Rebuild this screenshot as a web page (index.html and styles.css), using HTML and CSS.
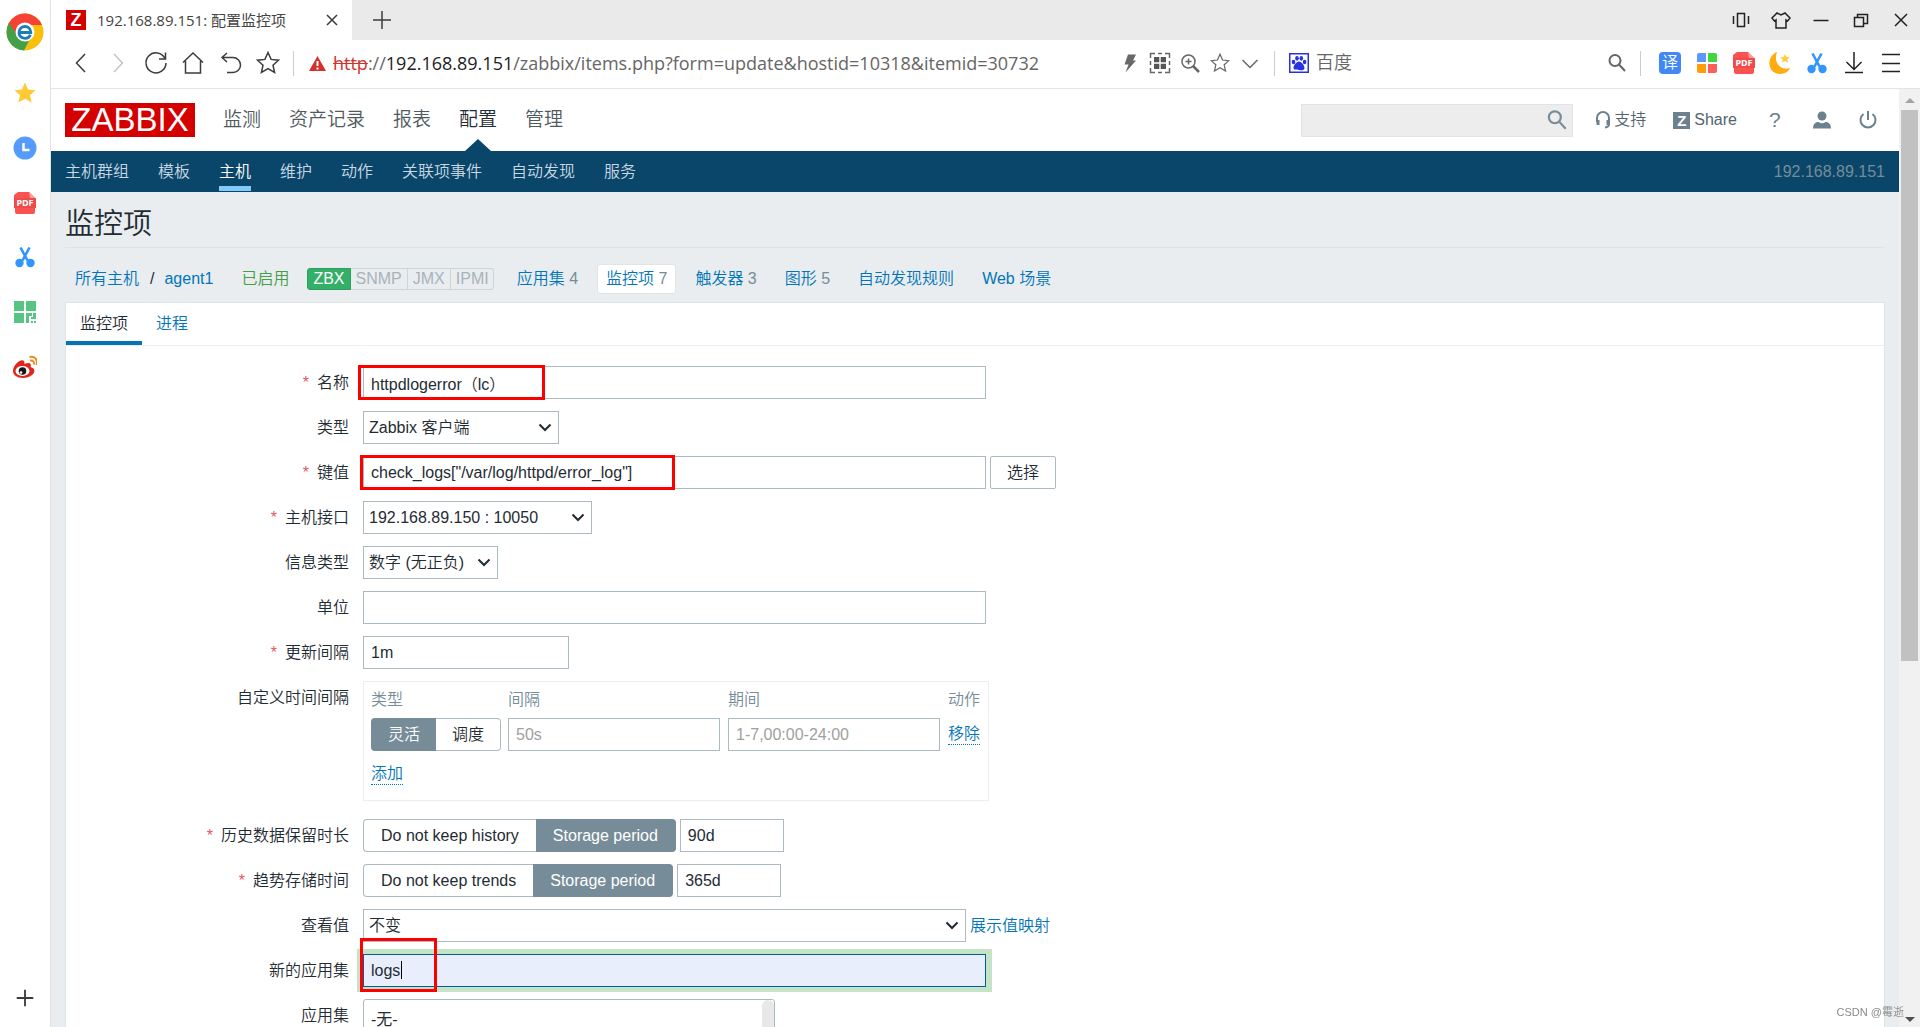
FILE: index.html
```html
<!DOCTYPE html>
<html lang="zh-CN">
<head>
<meta charset="utf-8">
<title>192.168.89.151: 配置监控项</title>
<link rel="stylesheet" href="styles.css">
</head>
<body>
<svg class="defs" aria-hidden="true">
  <symbol id="i-star" viewBox="0 0 24 24"><path d="M12 1.500l3.100 6.900 7.400.8-5.500 5 1.600 7.300-6.600-3.800-6.600 3.800 1.600-7.300-5.500-5 7.400-.8z"/></symbol>
  <symbol id="i-pdf" viewBox="0 0 24 24"><path d="M5 1h11l6 6v14a2 2 0 0 1-2 2H4a2 2 0 0 1-2-2V7H1V4z" fill="#fb5150"/><path d="M16 1l6 6h-5z" fill="#ff9a96"/><path d="M1 7h22v10H1z" fill="#f14a4a"/></symbol>
  <symbol id="i-cut" viewBox="0 0 24 24"><path d="M7.500 2.500l7 13M16.500 2.500l-7 13" stroke="#2f96fb" stroke-width="2.600" fill="none"/><circle cx="6.500" cy="18" r="4.200" fill="#2f96fb"/><circle cx="17.500" cy="18" r="4.200" fill="#2f96fb"/></symbol>
  <symbol id="i-search" viewBox="0 0 24 24"><circle cx="10" cy="9.500" r="5.500" fill="none"/><path d="M14 13.500l6 6.500"/></symbol>
</svg>
<div class="browser">
  <aside class="dock" aria-label="侧边栏">
    <svg class="dock-logo" viewBox="0 0 38 38"><circle cx="19" cy="19" r="18.500" fill="#f9bf0b"/><path d="M2.500 10.500A18.500 18.500 0 0 1 36 12H19l-8 12z" fill="#f44336"/><path d="M2.800 10A18.500 18.500 0 0 0 18 37.500L25 24l-13-1z" fill="#43a047"/><circle cx="19" cy="19" r="9.500" fill="#fff"/><path d="M12.500 19.500h12.300c0-8-11.800-8-11.800 0 0 7 9.500 7.500 11.300 2.300" fill="none" stroke="#1a7fb8" stroke-width="2.800"/></svg>
    <div class="dock-items">
      <button aria-label="收藏"><svg fill="#fecb36"><use href="#i-star"/></svg></button>
      <button aria-label="历史"><svg viewBox="0 0 24 24"><circle cx="12" cy="12" r="11.500" fill="#559bfb"/><path d="M10.500 7v7h6" fill="none" stroke="#fff" stroke-width="2.500"/></svg></button>
      <button aria-label="PDF"><svg viewBox="0 0 24 24"><use href="#i-pdf"/><text x="12" y="15" text-anchor="middle" class="pdf-text">PDF</text></svg></button>
      <button aria-label="截图"><svg><use href="#i-cut"/></svg></button>
      <button aria-label="二维码"><svg viewBox="0 0 24 24" fill="#58c483"><path d="M1 1h10v10H1zM13 1h10v10H13zM1 13h10v10H1zM13 13h6v3h-3v7h-3zM20 13h3v6h-5v-2h2zM18 21h2v2h-2zM21 21h2v2h-2z"/></svg></button>
      <button aria-label="微博"><svg viewBox="0 0 24 24"><path d="M0 16C0 10 8 3 11 6c1 1 0 3 0 3s5-2 6.500 0c.8 1 0 3 0 3 8 2 3 11-7.500 11C4 23 0 20 0 16z" fill="#e1251b"/><ellipse cx="9.500" cy="16" rx="7" ry="5" fill="#fff"/><circle cx="9.500" cy="16" r="3.800" fill="#161616"/><circle cx="8" cy="17.500" r="1.300" fill="#fff"/><path d="M17 5.500c3-.5 4.500 1.500 3.800 4M16.500 2c5.500-1.500 8.500 3 7 8" fill="none" stroke="#f08c1e" stroke-width="2"/></svg></button>
    </div>
    <button class="dock-add" aria-label="添加"><svg viewBox="0 0 24 24" class="line"><path d="M12 3v18M3 12h18" stroke-width="2"/></svg></button>
  </aside>

  <header class="tabstrip">
    <div class="tab">
      <span class="favicon">Z</span>
      <span class="tab-title">192.168.89.151: 配置监控项</span>
      <button aria-label="关闭标签"><svg viewBox="0 0 24 24" class="line"><path d="M7 7l10 10M17 7L7 17"/></svg></button>
    </div>
    <button class="tab-new" aria-label="新标签"><svg viewBox="0 0 24 24" class="line"><path d="M12 3v18M3 12h18"/></svg></button>
    <div class="window-controls">
      <button aria-label="手机"><svg viewBox="0 0 24 24" class="line dark"><path d="M8.500 5.500h7v13h-7zM4.500 8v8M19.500 8v8"/></svg></button>
      <button aria-label="皮肤"><svg viewBox="0 0 24 24" class="line dark"><path d="M8 5l4 2 4-2 5 5-2.500 3-1.500-1v8H7v-8l-1.500 1L3 10z"/></svg></button>
      <button aria-label="最小化"><svg viewBox="0 0 24 24" class="line dark"><path d="M4.500 12.500h15"/></svg></button>
      <button aria-label="还原"><svg viewBox="0 0 24 24" class="line dark"><path d="M5.500 9.500h9v9h-9zM8.500 9V6.500h10v9H15"/></svg></button>
      <button aria-label="关闭"><svg viewBox="0 0 24 24" class="line dark"><path d="M6 6l12 12M18 6L6 18"/></svg></button>
    </div>
  </header>

  <div class="toolbar">
    <div class="nav-buttons">
      <button aria-label="后退"><svg viewBox="0 0 24 24" class="line"><path d="M16 3l-8.500 9 8.500 9"/></svg></button>
      <button aria-label="前进"><svg viewBox="0 0 24 24" class="line pale"><path d="M8 3l8.500 9L8 21"/></svg></button>
      <button aria-label="刷新"><svg viewBox="0 0 24 24" class="line"><path d="M21 7.500A10 10 0 1 0 22 12M21.500 1.500v6.500H15"/></svg></button>
      <button aria-label="主页"><svg viewBox="0 0 24 24" class="line"><path d="M2 11.500L12 2l10 9.500M4.500 10v12h15V10"/></svg></button>
      <button aria-label="撤销"><svg viewBox="0 0 24 24" class="line"><path d="M8 2L3 6.500 8 11M3 6.500h11a7.500 7.500 0 0 1 0 15H8"/></svg></button>
      <button aria-label="收藏"><svg class="line"><use href="#i-star"/></svg></button>
    </div>
    <span class="divider"></span>
    <div class="address">
      <svg class="warn" viewBox="0 0 17 16"><path d="M8.500 1L17 16H0z" fill="#d2322b"/><path d="M8.500 6v5M8.500 12.500v2" stroke="#fff" stroke-width="2"/></svg>
      <span class="url"><s>http</s>://<b>192.168.89.151</b>/zabbix/items.php?form=update&amp;hostid=10318&amp;itemid=30732</span>
    </div>
    <div class="address-tools">
      <button aria-label="加速"><svg viewBox="0 0 24 24"><path d="M10 3.500h8l-3 6h3L7.500 21.500l3-8H6.500z" fill="#686868"/></svg></button>
      <button aria-label="二维码"><svg viewBox="0 0 24 24" class="line gray"><path d="M2.500 7V2.500H7M10 2.500h4M17 2.500h4.500V7M2.500 10v4M21.500 10v4M2.500 17v4.500H7M10 21.500h4M17 21.500h4.500V17"/><path d="M6 6h5.300v5.300H6zM12.700 6H18v5.300h-5.300zM6 12.700h5.300V18H6zM12.700 12.700H18V18h-5.300z" fill="#555" stroke="none"/></svg></button>
      <button aria-label="缩放"><svg viewBox="0 0 24 24" class="line gray"><circle cx="10.500" cy="10.500" r="6.500"/><path d="M15 15l6 6" stroke-width="2.500"/><path d="M10.500 7.500v6M7.500 10.500h6"/></svg></button>
      <button aria-label="收藏此页"><svg class="line gray small-star"><use href="#i-star"/></svg></button>
      <button aria-label="展开"><svg viewBox="0 0 24 24" class="line gray"><path d="M4.500 9l7.500 7.500L19.500 9"/></svg></button>
    </div>
    <span class="divider"></span>
    <div class="engine">
      <svg viewBox="0 0 20 20"><path d="M0 0h20v20H0z" fill="#2932e1"/><path d="M1.500 1.500h17v17h-17z" fill="#fff"/><g fill="#2932e1"><ellipse cx="4.500" cy="9" rx="1.800" ry="2.300"/><ellipse cx="8" cy="5.300" rx="1.800" ry="2.400"/><ellipse cx="12.300" cy="5.300" rx="1.800" ry="2.400"/><ellipse cx="15.600" cy="9" rx="1.800" ry="2.300"/><path d="M10 8.500c2.500 0 5.500 4 5.500 6.500s-3 2.500-5.500 2-5.500.5-5.500-2 3-6.500 5.500-6.500z"/></g></svg>
      <span>百度</span>
    </div>
    <div class="extensions-search"><svg class="line gray thick"><use href="#i-search"/></svg></div>
    <span class="divider"></span>
    <div class="extensions">
      <button aria-label="翻译" class="translate">译</button>
      <button aria-label="应用"><svg viewBox="0 0 24 24"><path d="M2 4q0-2 2-2h7v9H2z" fill="#5a98fb"/><path d="M13 2h7q2 0 2 2v7h-9z" fill="#42d53d"/><path d="M2 13h9v9H4q-2 0-2-2z" fill="#ff9d0a"/><path d="M13 13h9v7q0 2-2 2h-7z" fill="#ff5d5b"/></svg></button>
      <button aria-label="PDF"><svg viewBox="0 0 24 24"><use href="#i-pdf"/><text x="12" y="15" text-anchor="middle" class="pdf-text">PDF</text></svg></button>
      <button aria-label="夜间"><svg viewBox="0 0 24 24"><path d="M9 1C-2 5-1 23 12 23c5 0 9-3 10-6C13 20 5 12 9 1z" fill="#ffab12"/><path d="M17 3l1.400 3 3.400.3-2.500 2.200.8 3.300L17 10l-3 1.800.7-3.300-2.400-2.200 3.300-.3z" fill="#ffcd3c"/></svg></button>
      <button aria-label="截图"><svg><use href="#i-cut"/></svg></button>
      <button aria-label="下载"><svg viewBox="0 0 24 24" class="line dark"><path d="M12 1v17M4.500 11l7.500 7.500 7.500-7.500M3 21.500h18"/></svg></button>
      <button aria-label="菜单"><svg viewBox="0 0 24 24" class="line dark"><path d="M3 3.500h18M3 12.500h18M3 20.500h18"/></svg></button>
    </div>
  </div>

  <div class="viewport">
    <div class="page">
      <header class="top">
        <a class="logo" href="#">ZABBIX</a>
        <nav class="main-nav">
          <a href="#">监测</a><a href="#">资产记录</a><a href="#">报表</a><a href="#" class="active">配置</a><a href="#">管理</a>
        </nav>
        <div class="user-nav">
          <div class="search"><input type="search" aria-label="搜索"><svg class="line thick"><use href="#i-search"/></svg></div>
          <a class="support" href="#"><svg viewBox="0 0 16 18" fill="none" stroke="#6b828e" stroke-width="2"><path d="M2 11V7a6 6 0 0 1 12 0v6q0 3-4 3.500"/><path d="M3 9v5M13 9v5" stroke-width="3"/></svg>支持</a>
          <a class="share" href="#"><span>Z</span>Share</a>
          <a class="help" href="#">?</a>
          <a class="user" href="#" aria-label="用户"><svg viewBox="0 0 18 18" fill="#6b828e"><circle cx="9" cy="5" r="4.500"/><path d="M0 17.500c0-5 3-6.500 5.500-6.500Q9 13.500 12.500 11C15 11 18 12.500 18 17.500z"/></svg></a>
          <a class="power" href="#" aria-label="退出"><svg viewBox="0 0 18 18" fill="none" stroke="#6b828e" stroke-width="2"><path d="M9 0v9M4.500 3a7.500 7.500 0 1 0 9 0"/></svg></a>
        </div>
      </header>
      <nav class="sub-nav">
        <a href="#">主机群组</a><a href="#">模板</a><a href="#" class="active">主机</a><a href="#">维护</a><a href="#">动作</a><a href="#">关联项事件</a><a href="#">自动发现</a><a href="#">服务</a>
        <span class="server">192.168.89.151</span>
      </nav>
      <main>
        <h1>监控项</h1>
        <div class="crumbs">
          <a href="#">所有主机</a><span class="slash">/</span><a href="#">agent1</a><span class="enabled">已启用</span>
          <span class="badges"><span class="on">ZBX</span><span>SNMP</span><span>JMX</span><span>IPMI</span></span>
          <nav class="object-nav">
            <a href="#">应用集 <sup>4</sup></a><a href="#" class="selected">监控项 <sup>7</sup></a><a href="#">触发器 <sup>3</sup></a><a href="#">图形 <sup>5</sup></a><a href="#">自动发现规则</a><a href="#">Web 场景</a>
          </nav>
        </div>
        <section class="panel">
          <nav class="tabs"><a href="#" class="active">监控项</a><a href="#">进程</a></nav>
          <form>
            <div class="row">
              <label class="caption required" for="name">名称</label>
              <div class="field"><input id="name" class="wide" type="text" value="httpdlogerror（lc）"><i class="mark mark-name"></i></div>
            </div>
            <div class="row">
              <label class="caption" for="type">类型</label>
              <div class="field"><select id="type" class="w-type"><option>Zabbix 客户端</option></select></div>
            </div>
            <div class="row">
              <label class="caption required" for="key">键值</label>
              <div class="field"><input id="key" class="wide" type="text" value="check_logs[&quot;/var/log/httpd/error_log&quot;]"><button type="button" class="pick">选择</button><i class="mark mark-key"></i></div>
            </div>
            <div class="row">
              <label class="caption required" for="iface">主机接口</label>
              <div class="field"><select id="iface" class="w-iface"><option>192.168.89.150 : 10050</option></select></div>
            </div>
            <div class="row">
              <label class="caption" for="info">信息类型</label>
              <div class="field"><select id="info" class="w-info"><option>数字 (无正负)</option></select></div>
            </div>
            <div class="row">
              <label class="caption" for="units">单位</label>
              <div class="field"><input id="units" class="wide" type="text"></div>
            </div>
            <div class="row">
              <label class="caption required" for="delay">更新间隔</label>
              <div class="field"><input id="delay" class="w-delay" type="text" value="1m"></div>
            </div>
            <div class="row row-table">
              <span class="caption">自定义时间间隔</span>
              <div class="intervals">
                <table>
                  <thead><tr><th class="c-type">类型</th><th class="c-value">间隔</th><th class="c-value">期间</th><th>动作</th></tr></thead>
                  <tbody>
                    <tr>
                      <td><div class="segmented compact"><input type="radio" name="flex" id="flex0" checked><label for="flex0">灵活</label><input type="radio" name="flex" id="flex1"><label for="flex1">调度</label></div></td>
                      <td><input class="w-cell" type="text" placeholder="50s" aria-label="间隔"></td>
                      <td><input class="w-cell" type="text" placeholder="1-7,00:00-24:00" aria-label="期间"></td>
                      <td><a class="dotted" href="#">移除</a></td>
                    </tr>
                    <tr class="add"><td colspan="4"><a class="dotted" href="#">添加</a></td></tr>
                  </tbody>
                </table>
              </div>
            </div>
            <div class="row">
              <label class="caption required" for="history">历史数据保留时长</label>
              <div class="field"><div class="segmented"><input type="radio" name="hist" id="hist0"><label for="hist0">Do not keep history</label><input type="radio" name="hist" id="hist1" checked><label for="hist1">Storage period</label></div><input id="history" class="w-period" type="text" value="90d"></div>
            </div>
            <div class="row">
              <label class="caption required" for="trends">趋势存储时间</label>
              <div class="field"><div class="segmented"><input type="radio" name="trend" id="trend0"><label for="trend0">Do not keep trends</label><input type="radio" name="trend" id="trend1" checked><label for="trend1">Storage period</label></div><input id="trends" class="w-period" type="text" value="365d"></div>
            </div>
            <div class="row">
              <label class="caption" for="valuemap">查看值</label>
              <div class="field"><select id="valuemap" class="w-map"><option>不变</option></select><a href="#">展示值映射</a></div>
            </div>
            <div class="row">
              <label class="caption" for="newapp">新的应用集</label>
              <div class="field"><input id="newapp" class="wide focused" type="text" value="logs"><i class="caret"></i><i class="mark mark-app"></i></div>
            </div>
            <div class="row">
              <label class="caption" for="apps">应用集</label>
              <div class="field listwrap"><select id="apps" size="6" class="listbox"><option>-无-</option></select><i class="list-track"></i></div>
            </div>
          </form>
        </section>
      </main>
    </div>
    <div class="scrollbar" aria-hidden="true"><i class="arrow up"></i><i class="thumb"></i><i class="arrow down"></i></div>
  </div>
  <span class="watermark">CSDN @霉逝</span>
</div>
</body>
</html>
```
FILE: styles.css
```css
* { box-sizing: border-box; }

body {
  margin: 0;
  background: #fff;
  color: #1f2c33;
  font: 350 16px/20px "Liberation Sans", "Noto Sans CJK SC", sans-serif;
}

a { color: #0275b8; text-decoration: none; }
button { padding: 0; border: 0; background: none; font: inherit; color: inherit; }
svg { display: block; width: 24px; height: 24px; flex: none; }
.defs { position: absolute; width: 0; height: 0; }
.line { fill: none; stroke: #3c3c3c; stroke-width: 1.5; }
.line.dark { stroke: #222; }
.line.pale { stroke: #c4c4c4; }
.line.gray { stroke: #666; }
.line.thick { stroke-width: 2; }
.pdf-text { font: bold 9px "Noto Sans", sans-serif; fill: #fff; }

/* Browser window */
.browser {
  display: grid;
  grid-template: 40px 49px minmax(0, 1fr) / 51px minmax(0, 1fr);
  height: 100vh;
}

.dock {
  grid-row: 1 / 4;
  display: flex;
  flex-direction: column;
  align-items: center;
  padding: 13px 0 18px;
  border-right: 1px solid #e2e2e2;
}
.dock-logo { width: 38px; height: 38px; }
.dock-items {
  display: flex;
  flex-direction: column;
  justify-content: space-between;
  height: 298px;
  margin-top: 30px;
}
.dock-add { margin-top: auto; }
.dock-add svg { width: 22px; height: 22px; }

.tabstrip { display: flex; align-items: center; background: #eaeaea; }
.tab {
  display: flex;
  align-items: center;
  align-self: stretch;
  width: 301px;
  padding: 0 8px 0 15px;
  background: #fff;
}
.favicon {
  width: 20px;
  height: 20px;
  background: #d40000;
  color: #fff;
  font-size: 18px;
  font-weight: bold;
  text-align: center;
}
.tab-title {
  flex: 1;
  margin-left: 11px;
  color: #444;
  font: 15px/20px "Open Sans", "Noto Sans CJK SC", sans-serif;
}
.tab-new { margin-left: 18px; }
.window-controls { display: flex; gap: 16px; margin-left: auto; padding-right: 7px; }

.toolbar {
  display: flex;
  align-items: center;
  padding: 0 17px 2px 0;
  border-bottom: 1px solid #e4e4e4;
}
.nav-buttons { display: flex; justify-content: space-between; width: 211px; margin-left: 18px; }
.divider { width: 1px; height: 25px; background: #ccc; }
.nav-buttons + .divider { margin-left: 13px; }
.address { display: flex; align-items: center; flex: 0 0 824px; padding-left: 15px; }
.warn { width: 17px; height: 16px; }
.url {
  margin-left: 7px;
  color: #666;
  font: 18px/24px "Open Sans", "Noto Sans CJK SC", sans-serif;
}
.url s { color: #d2322b; }
.url b { color: #222; font-weight: normal; }
.address-tools { display: flex; gap: 6px; margin-right: 12px; }
.small-star { padding: 2px; }
.engine { display: flex; align-items: center; gap: 7px; margin-left: 14px; color: #666; font-size: 18px; }
.engine svg { width: 20px; height: 20px; }
.extensions-search { margin: 0 11px 0 auto; }
.extensions { display: flex; justify-content: space-between; width: 245px; margin-left: 17px; }
.translate {
  width: 22px;
  height: 22px;
  margin: 1px;
  border-radius: 4px;
  background: #4187f5;
  color: #fff;
  font-size: 16px;
  line-height: 20px;
}

.viewport { display: flex; min-height: 0; }
.page {
  flex: 1;
  min-width: 0;
  overflow-y: auto;
  scrollbar-width: none;
  background: #e9edf0;
}
.scrollbar {
  display: flex;
  flex-direction: column;
  align-items: center;
  width: 21px;
  padding: 9px 1px 5px;
  background: #f1f1f1;
}
.thumb { flex: 0 0 calc(60% - 3px); width: 17px; margin-top: 7px; background: #c1c1c1; }
.arrow { border: 5px solid transparent; }
.up { border-top: 0; border-bottom-color: #a3a3a3; }
.down { border-bottom: 0; border-top-color: #505050; margin-top: auto; }
.watermark {
  position: fixed;
  right: 16px;
  bottom: 6px;
  color: #8a8a8a;
  font-size: 11px;
  line-height: 18px;
}

/* Zabbix header */
.top { display: flex; align-items: center; height: 62px; padding: 0 14px; background: #fff; }
.logo {
  width: 130px;
  height: 34px;
  background: #d40000;
  color: #fff;
  font-size: 33px;
  line-height: 34px;
  text-align: center;
}
.main-nav { display: flex; gap: 28px; align-self: stretch; margin-left: 28px; }
.main-nav a { position: relative; color: #4f5a60; font-size: 19px; line-height: 62px; }
.main-nav .active { color: #1f2c33; }
.main-nav .active::after {
  content: "";
  position: absolute;
  left: 50%;
  bottom: 0;
  margin-left: -13px;
  border: 13px solid transparent;
  border-top: 0;
  border-bottom: 12px solid #0a466a;
}
.user-nav { display: flex; align-items: center; margin-left: auto; padding-right: 8px; }
.user-nav a { color: #52646e; }
.user-nav svg { width: 18px; height: 18px; }
.search {
  display: flex;
  align-items: center;
  width: 272px;
  height: 33px;
  margin-right: 22px;
  border: 1px solid #dfe4e7;
  background: #ededed;
}
.search input { flex: 1; min-width: 0; border: 0; background: none; }
.user-nav .search svg { width: 26px; height: 26px; margin-right: 2px; stroke: #768d99; }
.support { display: flex; align-items: center; gap: 3px; margin-right: 27px; }
.user-nav .support svg { width: 16px; }
.share { display: flex; align-items: center; gap: 4px; }
.share span {
  width: 17px;
  height: 17px;
  background: #6b828e;
  color: #fff;
  font-size: 15px;
  font-weight: bold;
  line-height: 17px;
  text-align: center;
}
.user-nav .help { width: 10px; margin: 0 34px 0 32px; color: #6b828e; font-size: 21px; }
.power { margin-left: 28px; }

.sub-nav {
  display: flex;
  gap: 29px;
  height: 41px;
  padding: 0 14px;
  background: #0a466a;
  line-height: 35px;
}
.sub-nav a { height: 40px; padding-top: 3px; color: #c8d8e2; }
.sub-nav .active { border-bottom: 5px solid #83caf9; color: #fff; }
.server { margin-left: auto; padding-top: 3px; color: #768d99; }

/* Page body */
main { padding: 0 14px 20px; }
h1 {
  margin: 0;
  padding: 15px 0 6px;
  border-bottom: 1px solid #dfe4e7;
  font-size: 29px;
  font-weight: inherit;
  line-height: 34px;
}
.crumbs { display: flex; align-items: center; height: 54px; padding: 7px 0 0 10px; }
.slash { margin: 0 10px 0 11px; }
.enabled { margin: 0 18px 0 28px; color: #429e47; }
.badges { display: flex; height: 22px; color: #a8b3b8; }
.badges span { padding: 0 5px; border: 1px solid #ccd5d9; border-left-width: 0; line-height: 20px; }
.badges span:last-child { padding-right: 4px; border-radius: 0 3px 3px 0; }
.badges .on { border: 1px solid #2f9f5e; border-radius: 3px 0 0 3px; background: #34af67; color: #fff; }
.object-nav { display: flex; gap: 10px; margin-left: 14px; }
.object-nav a { padding: 4px 8px; border: 1px solid transparent; border-radius: 3px; }
.object-nav .selected { border-color: #dfe4e7; background: #fff; }
sup { color: #768d99; font-size: 16px; line-height: 20px; vertical-align: baseline; }

.panel { border: 1px solid #dfe4e7; background: #fff; }
.tabs { display: flex; border-bottom: 1px solid #ebeef0; }
.tabs a { padding: 11px 14px; line-height: 20px; }
.tabs .active { padding-bottom: 7px; border-bottom: 4px solid #0275b8; color: #1f2c33; }

form { display: flex; flex-direction: column; gap: 12px; padding: 20px 0; }
.row { display: flex; gap: 14px; line-height: 33px; }
.row-table { margin-bottom: 6px; }
.caption { width: 283px; text-align: right; }
.required::before { content: "*"; margin-right: 8px; color: #e45959; }
.field { display: flex; gap: 4px; position: relative; }

input[type="text"], select, .pick {
  height: 33px;
  border: 1px solid #acbbc2;
  border-radius: 0;
  background: #fff;
  color: #1f2c33;
  font: inherit;
  line-height: 20px;
}
input[type="text"] { padding: 0 7px; }
input::placeholder { color: #a0a0a0; opacity: 1; }
select {
  appearance: none;
  padding: 0 5px;
  background: #fff url("data:image/svg+xml,%3Csvg xmlns='http://www.w3.org/2000/svg' width='14' height='9'%3E%3Cpath d='M1.500 1.500l5.500 5.500 5.500-5.500' fill='none' stroke='%231f2c33' stroke-width='2'/%3E%3C/svg%3E") no-repeat right 6px center;
}
.wide { width: 623px; }
.w-type { width: 196px; }
.w-iface { width: 229px; }
.w-info { width: 135px; }
.w-delay { width: 206px; }
.w-cell { width: 212px; }
.w-period { width: 104px; }
.w-map { width: 603px; }
.pick { width: 66px; border-radius: 2px; }
input[type="text"].focused {
  border-color: #005e9e;
  background: #e8eefc;
  box-shadow: 1px 0 0 5px #c5e3c7, -1px 0 0 5px #c5e3c7;
}

.intervals { width: 626px; height: 120px; padding-left: 7px; border: 1px solid #ebeef0; }
table { border-collapse: collapse; table-layout: fixed; width: 610px; }
th, td { padding: 0; text-align: left; vertical-align: middle; font-weight: inherit; }
th { height: 36px; color: #768d99; line-height: 36px; }
.c-type { width: 137px; }
.c-value { width: 220px; }
td { height: 33px; line-height: 20px; }
td input[type="text"] { display: block; }
.add td { height: 46px; }
.dotted { display: inline-block; border-bottom: 1px dotted #0275b8; }

.segmented { display: flex; position: relative; }
.segmented input { position: absolute; opacity: 0; }
.segmented label {
  height: 33px;
  padding: 0 17px;
  border: 1px solid #acbbc2;
  line-height: 31px;
}
.segmented.compact label { padding: 0 16px; }
.segmented label:first-of-type { border-right: 0; border-radius: 4px 0 0 4px; }
.segmented label:last-of-type { border-left: 0; border-radius: 0 4px 4px 0; }
.segmented input:checked + label { border-color: #768d99; background: #768d99; color: #fff; }

.listbox {
  width: 412px;
  height: 120px;
  padding: 6px 3px;
  border-radius: 3px;
  background: #fff;
  overflow: hidden;
}
.listbox option { padding: 0 4px; line-height: 24px; min-height: 24px; }
.list-track {
  position: absolute;
  top: 1px;
  right: 1px;
  width: 12px;
  height: 118px;
  border-radius: 6px;
  background: #e8e8e8;
}

/* Highlights over the form */
.mark { position: absolute; border: 3px solid #f00; pointer-events: none; }
.mark-name { left: -5px; top: -1px; width: 187px; height: 35px; }
.mark-key { left: -3px; top: -1px; width: 315px; height: 35px; }
.mark-app { left: -3px; top: -16px; width: 77px; height: 54px; }
.caret { position: absolute; left: 38px; top: 7px; width: 1px; height: 18px; background: #000; }
```
